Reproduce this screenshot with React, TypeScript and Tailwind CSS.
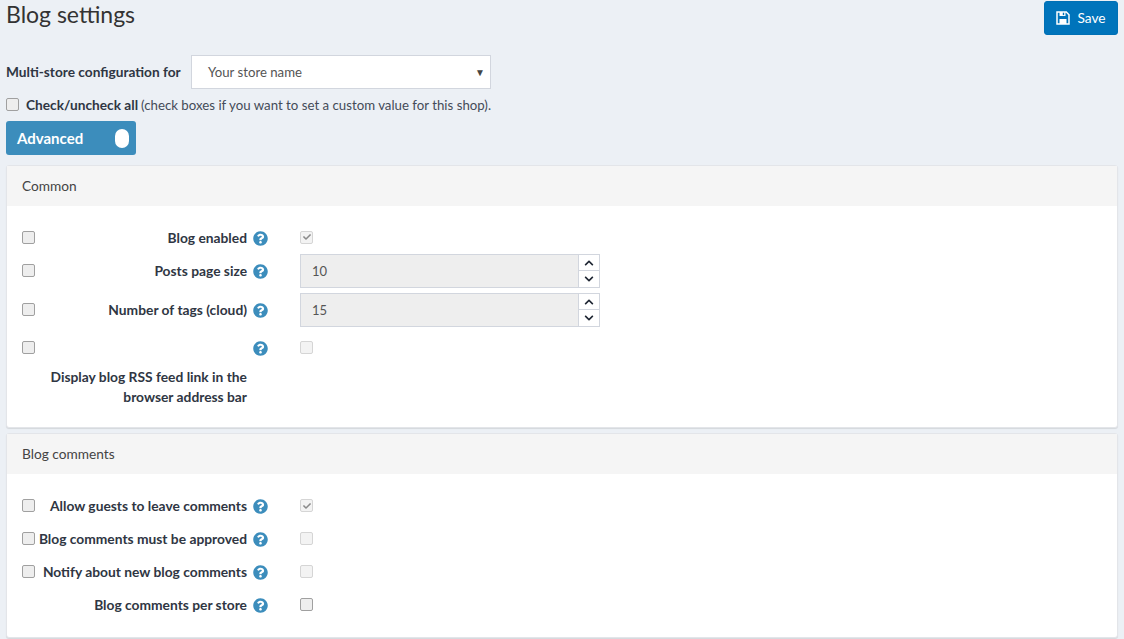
import { ReactNode } from "react";
import { FaCheck, FaChevronDown, FaChevronUp, FaQuestionCircle } from "react-icons/fa";

function SaveIcon() {
  return (
    <svg width="14" height="14" viewBox="0 0 14 14" className="shrink-0">
      <path d="M1 1h9.3L13 3.7V13H1z" fill="none" stroke="#ffffff" strokeWidth="1.5" />
      <rect x="3.5" y="1" width="6" height="4" fill="#ffffff" />
      <rect x="6.8" y="1.7" width="1.4" height="2.4" fill="#0074bb" />
      <rect x="3.5" y="8" width="7" height="5" fill="#ffffff" />
    </svg>
  );
}

function Box({ checked = false, disabled = false }: { checked?: boolean; disabled?: boolean }) {
  return (
    <span
      className={`flex w-[13px] h-[13px] mb-[2px] shrink-0 items-center justify-center rounded-[2px] border ${
        disabled ? "border-[#d5d5d5] bg-[#f3f3f3]" : "border-[#a0a0a0] bg-[#eeeeee]"
      }`}
    >
      {checked && <FaCheck size={8} className="text-[#8a8a8a]" />}
    </span>
  );
}

function NumberInput({ value }: { value: string }) {
  return (
    <div className="flex w-[300px] h-[34px] border border-[#d2d6de] bg-white">
      <div className="flex flex-1 items-center bg-[#eeeeee] pl-[11px] text-[13px] text-[#555555]">{value}</div>
      <div className="flex w-[21px] flex-col border-l border-[#d2d6de] text-[#1f2633]">
        <div className="flex h-[16px] items-center justify-center border-b border-[#d2d6de]">
          <FaChevronUp size={10} />
        </div>
        <div className="flex flex-1 items-center justify-center">
          <FaChevronDown size={10} />
        </div>
      </div>
    </div>
  );
}

function Row({
  label,
  override = true,
  height = "h-[33px]",
  children,
}: {
  label?: string;
  override?: boolean;
  height?: string;
  children: ReactNode;
}) {
  return (
    <div className={`flex items-center ${height}`}>
      <div className="flex w-[13px] shrink-0 items-center">{override && <Box />}</div>
      <div className="mb-[1px] w-[212px] shrink-0 text-right text-[13.8px] font-bold text-[#2f3643]">{label}</div>
      <FaQuestionCircle size={15} className="ml-[6px] shrink-0 text-[#3c8dbc]" />
      <div className="ml-[32px] flex items-center">{children}</div>
    </div>
  );
}

function Panel({ title, children }: { title: string; children: ReactNode }) {
  return (
    <section className="rounded-[3px] border border-[#e3e5e9] bg-white shadow-[0_1px_1px_rgba(0,0,0,0.1)]">
      <div className="flex h-[40px] items-center bg-[#f5f5f5] px-[15px] text-[#444444]">{title}</div>
      {children}
    </section>
  );
}

export default function App() {
  return (
    <div className="min-h-screen overflow-hidden bg-[#ecf0f5] px-[6px] font-['Lato',sans-serif] text-[13.7px] leading-[20px] text-[#333333]">
      <div className="flex items-start justify-between pt-[1px]">
        <h1 className="text-[23px] leading-[26px] text-[#333333]">Blog settings</h1>
        <button className="flex h-[34px] w-[74px] items-center justify-center gap-[7px] rounded-[3px] border border-[#0070b5] bg-[#0074bb] text-white">
          <SaveIcon />
          Save
        </button>
      </div>

      <div className="mt-[20px] flex items-center">
        <span className="w-[185px] font-bold text-[#2f3643]">Multi-store configuration for</span>
        <div className="flex h-[34px] w-[300px] items-center justify-between border border-[#d2d6de] bg-white pl-[16px] pr-[5px] text-[13.2px] text-[#555555]">
          Your store name
          <span className="text-[10px] text-[#444444]">▼</span>
        </div>
      </div>

      <div className="mt-[6px] flex h-[20px] items-center">
        <Box />
        <span className="ml-[7px] font-bold text-[#2f3643]">Check/uncheck all</span>
        <span className="ml-[3px] text-[13.25px] text-[#444b58]">(check boxes if you want to set a custom value for this shop).</span>
      </div>

      <div className="mt-[6px] flex h-[34px] w-[130px] items-center justify-between rounded-[3px] bg-[#3c8dbc] pl-[11px] pr-[7px] text-[15px] font-bold text-white">
        Advanced
        <span className="h-[19px] w-[14px] rounded-full bg-white" />
      </div>

      <div className="mt-[10px] flex flex-col gap-[5px]">
        <Panel title="Common">
          <div className="px-[15px] pb-[20px] pt-[16px]">
            <Row label="Blog enabled" height="h-[32px]">
              <Box checked disabled />
            </Row>
            <Row label="Posts page size" height="mb-[5px] h-[34px]">
              <NumberInput value="10" />
            </Row>
            <Row label="Number of tags (cloud)" height="mb-[5px] h-[34px]">
              <NumberInput value="15" />
            </Row>
            <Row>
              <Box disabled />
            </Row>
            <div className="ml-[13px] mt-[2px] w-[212px] text-right text-[13.8px] font-bold text-[#2f3643]">
              Display blog RSS feed link in the browser address bar
            </div>
          </div>
        </Panel>

        <Panel title="Blog comments">
          <div className="px-[15px] pb-[15px] pt-[16px]">
            <Row label="Allow guests to leave comments">
              <Box checked disabled />
            </Row>
            <Row label="Blog comments must be approved">
              <Box disabled />
            </Row>
            <Row label="Notify about new blog comments">
              <Box disabled />
            </Row>
            <Row label="Blog comments per store" override={false}>
              <Box />
            </Row>
          </div>
        </Panel>
      </div>
    </div>
  );
}
